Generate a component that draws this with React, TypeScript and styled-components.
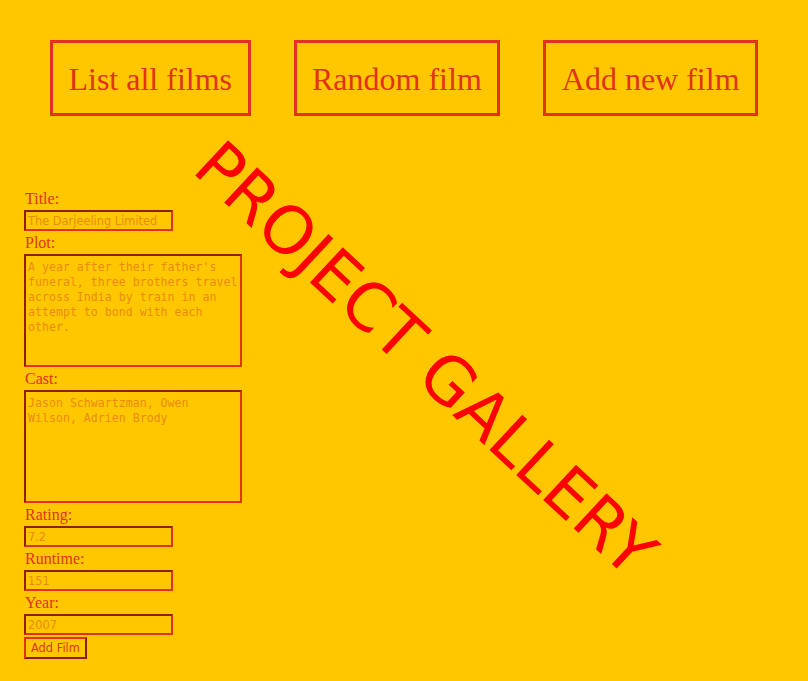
import React from "react";
import styled, { createGlobalStyle } from "styled-components";

const red = "#e2321c";
const orange = "#eb8c12";

const GlobalStyle = createGlobalStyle`
  html, body {
    margin: 0;
    padding: 0;
    background: #ffc700;
  }
  body {
    font-family: "Liberation Serif", "Times New Roman", serif;
  }
`;

const Page = styled.div`
  position: relative;
  min-height: 681px;
  background: #ffc700;
  overflow: hidden;
`;

const Nav = styled.nav`
  display: flex;
  justify-content: center;
  gap: 43px;
  padding-top: 40px;
`;

const NavButton = styled.button`
  height: 76px;
  padding: 3px 15.5px 0;
  background: transparent;
  border: 3px solid ${red};
  color: ${red};
  font-family: "Liberation Serif", "Times New Roman", serif;
  font-size: 32px;
  cursor: pointer;
`;

const Form = styled.form`
  display: flex;
  flex-direction: column;
  align-items: flex-start;
  gap: 2px;
  padding: 73px 0 0 24px;
`;

const Label = styled.label`
  display: block;
  height: 19px;
  line-height: 19px;
  margin-left: 1px;
  font-size: 16px;
  color: ${red};
`;

const TextInput = styled.input`
  box-sizing: border-box;
  width: 149px;
  height: 21px;
  padding: 1px 2px;
  background: transparent;
  border: 2px inset ${red};
  color: ${orange};
  font-family: "DejaVu Sans", Verdana, sans-serif;
  font-size: 11.4px;
  outline: none;
`;

const TextArea = styled.textarea`
  box-sizing: border-box;
  width: 218px;
  height: 113px;
  padding: 4px 1px 4px 2px;
  background: transparent;
  border: 2px inset ${red};
  color: ${orange};
  font-family: "DejaVu Sans Mono", monospace;
  font-size: 11.6px;
  line-height: 15px;
  resize: none;
  overflow: hidden;
  outline: none;
`;

const SubmitButton = styled.button`
  height: 22px;
  padding: 0 5px;
  background: transparent;
  border: 2px outset ${red};
  color: ${red};
  font-family: "DejaVu Sans", Verdana, sans-serif;
  font-size: 11.4px;
`;

const Watermark = styled.div`
  position: absolute;
  left: 425px;
  top: 359px;
  transform: translate(-50%, -50%) rotate(43deg);
  white-space: nowrap;
  font-family: "DejaVu Sans", Verdana, sans-serif;
  font-size: 66px;
  color: #ff0000;
  pointer-events: none;
`;

export default function App() {
  return (
    <Page>
      <GlobalStyle />
      <Nav>
        <NavButton>List all films</NavButton>
        <NavButton>Random film</NavButton>
        <NavButton>Add new film</NavButton>
      </Nav>
      <Form onSubmit={(e) => e.preventDefault()}>
        <Label>Title:</Label>
        <TextInput defaultValue="The Darjeeling Limited" />
        <Label>Plot:</Label>
        <TextArea defaultValue="A year after their father's funeral, three brothers travel across India by train in an attempt to bond with each other." />
        <Label>Cast:</Label>
        <TextArea defaultValue="Jason Schwartzman, Owen Wilson, Adrien Brody" />
        <Label>Rating:</Label>
        <TextInput defaultValue="7.2" />
        <Label>Runtime:</Label>
        <TextInput defaultValue="151" />
        <Label>Year:</Label>
        <TextInput defaultValue="2007" />
        <SubmitButton type="submit">Add Film</SubmitButton>
      </Form>
      <Watermark>PROJECT GALLERY</Watermark>
    </Page>
  );
}
